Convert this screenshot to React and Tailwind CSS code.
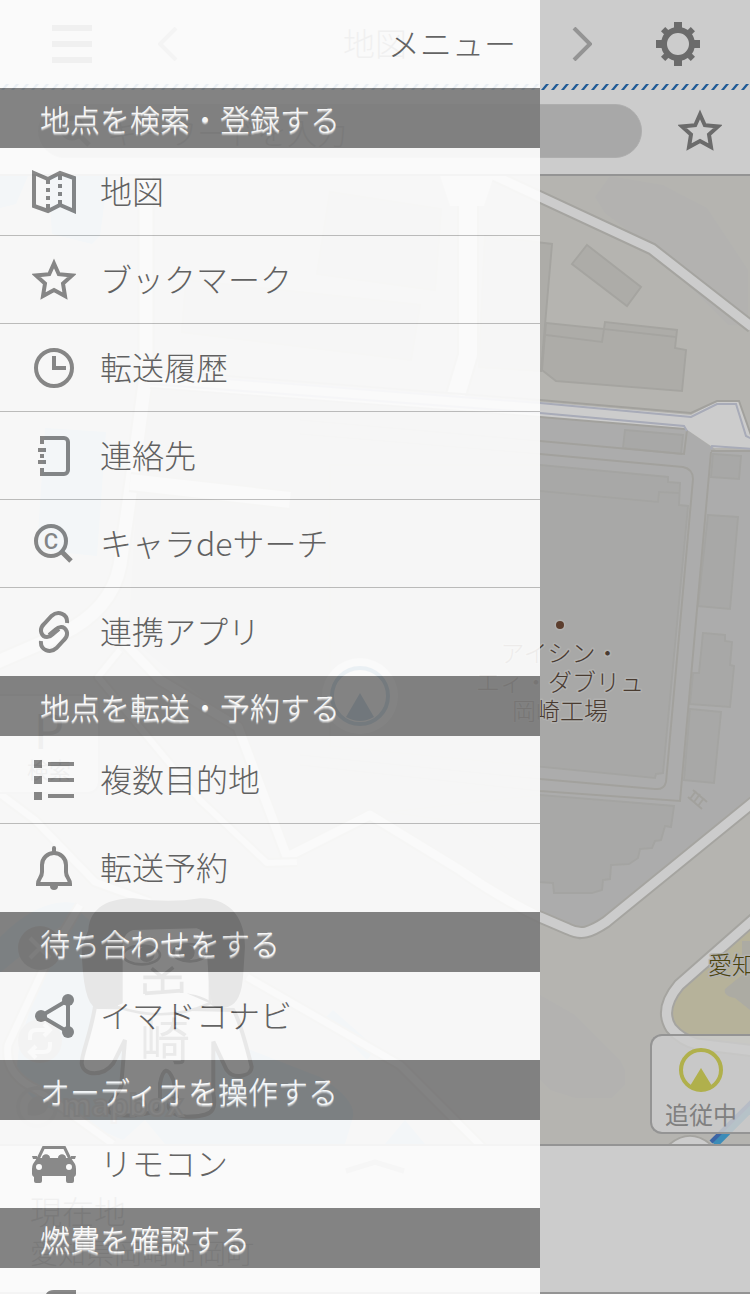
const icons = {
  map: (
    <>
      <path d="M2 3l14 6 12-6 14 5v33l-14-6-12 6-14-5z" />
      <path d="M16 9v5M16 18v4M16 26v4M16 34v6M28 3v7M28 14v4M28 22v4M28 30v6" />
    </>
  ),
  star: <path d="M22 5.500l4.800 10.700L40 17.400l-9 8.200L33 38l-11-6-11 6 2-12.400-9-8.200 13.200-1.200z" />,
  clock: (
    <>
      <circle cx="22" cy="22" r="18" />
      <path d="M22 10v12h12" />
    </>
  ),
  contacts: (
    <>
      <path d="M10 10V4h22a4 4 0 0 1 4 4v28a4 4 0 0 1-4 4H10v-6" />
      <path d="M6 16h8M8 22h4M6 28h8" />
    </>
  ),
  search: (
    <>
      <circle cx="19" cy="19" r="15" />
      <path d="M29 29l10 10" strokeWidth="5" />
      <text
        x="19"
        y="27"
        textAnchor="middle"
        fontSize="22"
        fontWeight="500"
        fill="currentColor"
        stroke="none"
        fontFamily="Roboto, sans-serif"
      >
        C
      </text>
    </>
  ),
  link: (
    <>
      <path d="M35 13c1-9-9-13-15.500-7L12 14c-6 6-2 13 3 13 3 0 5-2 6-3l6-5" />
      <path d="M35 13c1-9-9-13-15.500-7L12 14c-6 6-2 13 3 13 3 0 5-2 6-3l6-5" transform="rotate(180 22 22)" />
    </>
  ),
  list: (
    <>
      <path d="M2 6h8M2 22h8M2 38h8" strokeWidth="8" />
      <path d="M16 6h26M16 22h26M16 38h26" />
    </>
  ),
  bell: (
    <>
      <path d="M22 7a12 12 0 0 1 12 12v7c0 6 4 6 4 12H6c0-6 4-6 4-12v-7A12 12 0 0 1 22 7z" />
      <path d="M22 2v4" strokeLinecap="round" />
      <path d="M18 40a4 4 0 0 0 8 0z" fill="currentColor" stroke="none" />
    </>
  ),
  share: (
    <>
      <path d="M36 6v32L9 22z" />
      <g fill="currentColor" stroke="none">
        <circle cx="36" cy="6" r="6" />
        <circle cx="36" cy="38" r="6" />
        <circle cx="9" cy="22" r="6" />
      </g>
    </>
  ),
  car: (
    <>
      <path d="M6 17l5.500-11.500h21L38 17" strokeWidth="3" />
      <g fill="currentColor" stroke="none">
        <path d="M0 14h5v3H1zM44 14h-5v3h4z" />
        <path
          fillRule="evenodd"
          d="M5 16h5c0-5 8-5 8 0h8c0-5 8-5 8 0h5l4 6q1 2 1 5v5q0 2-2 3v4q0 2-2 2h-4q-2 0-2-2v-5H10v5q0 2-2 2H4q-2 0-2-2v-4q-2-1-2-3v-5q0-3 1-5zM7 22a3 3 0 1 0 0 6 3 3 0 1 0 0-6zM37 22a3 3 0 1 0 0 6 3 3 0 1 0 0-6z"
        />
      </g>
    </>
  ),
  fuel: <path d="M44 0H22q-9 0-9 9v35h31z" fill="currentColor" stroke="none" />,
};

const sections = [
  {
    title: "地点を検索・登録する",
    items: [
      { icon: "map", label: "地図" },
      { icon: "star", label: "ブックマーク" },
      { icon: "clock", label: "転送履歴" },
      { icon: "contacts", label: "連絡先" },
      { icon: "search", label: "キャラdeサーチ" },
      { icon: "link", label: "連携アプリ" },
    ],
  },
  {
    title: "地点を転送・予約する",
    items: [
      { icon: "list", label: "複数目的地" },
      { icon: "bell", label: "転送予約" },
    ],
  },
  { title: "待ち合わせをする", items: [{ icon: "share", label: "イマドコナビ" }] },
  { title: "オーディオを操作する", items: [{ icon: "car", label: "リモコン" }] },
  { title: "燃費を確認する", items: [{ icon: "fuel", label: "" }] },
];

function Icon({ name, className = "" }) {
  return (
    <svg
      viewBox="0 0 44 44"
      fill="none"
      stroke="currentColor"
      strokeWidth="4"
      className={`size-11 shrink-0 ${className}`}
      aria-hidden="true"
    >
      {icons[name]}
    </svg>
  );
}

function Chevron({ flip }) {
  return (
    <svg
      viewBox="0 0 20 34"
      fill="none"
      stroke="currentColor"
      strokeWidth="4"
      className={`w-5 ${flip ? "-scale-x-100" : ""}`}
    >
      <path d="M2 1l16 16L2 33" />
    </svg>
  );
}

function Gear() {
  return (
    <svg viewBox="-22 -22 44 44" fill="currentColor" className="size-11">
      <circle r="14" fill="none" stroke="currentColor" strokeWidth="6" />
      {[0, 90, 180, 270].map((a) => (
        <g key={a} transform={`rotate(${a})`}>
          <rect x="-4" y="-22" width="8" height="9" />
          <rect x="-3" y="-21" width="6" height="8" transform="rotate(45)" />
        </g>
      ))}
    </svg>
  );
}

function Arrow({ className }) {
  return (
    <svg viewBox="0 0 44 44" className={className}>
      <circle cx="22" cy="22" r="20" fill="none" stroke="currentColor" strokeWidth="4" />
      <path d="M22 20l11 18q-11 6-22 0z" fill="currentColor" />
    </svg>
  );
}

function Road({ d, width = 9 }) {
  return (
    <g fill="none" strokeLinejoin="round">
      <path d={d} stroke="#cfcec9" strokeWidth={width + 4} />
      <path d={d} stroke="#ffffff" strokeWidth={width} />
    </g>
  );
}

function MapCanvas() {
  return (
    <svg
      viewBox="0 176 750 968"
      preserveAspectRatio="xMinYMin slice"
      className="w-full h-full"
      fontFamily="'Noto Sans CJK JP', sans-serif"
    >
      <rect y="176" width="750" height="968" fill="#e3e2dc" />
      <path
        d="M610 176l53 9 44 23 41 62v56l-20-1-76-76-47-36-10-16z"
        fill="#e0dfdd"
      />
      <path d="M540 995l35 20 45 45 5 10v15l-13 13h-37l-25-8-12-12z" fill="#e0dfdd" />

      {/* water */}
      <g fill="#a8d4ef">
        <path d="M0 176h28l-12 28-16 4z" />
        <path d="M50 176h58l-8 60-8 8-40-10-2-30z" />
        <path d="M45 428l61 4-9 124-60-6z" />
        <path d="M0 937q40-40 75-34l8 14-20 8q-30 20-63 48z" />
        <path d="M16 1072l4-30 28-90 32-40 150 130 90 35q36 22 33 40l-8 27H165l-20-24-22 20-60-26q-40-14-47-42z" />
        <path d="M325 1018l8-8 43 38-9 12z" />
        <path d="M385 1144l20-24 20 24z" />
      </g>

      {/* factory grounds */}
      <path
        d="M150 385l390 27 146 17 30 21h34v358L580 940l-120-70-90-55-83 42-49-130-110-90 10-170z"
        fill="#d8d8d7"
      />
      <g fill="#d3d3d1" stroke="#cececb" strokeWidth="2">
        <path d="M330 465l210 0 128 12v5l12 1-1 22 9 1-25 267-7 1-1 4-325-32z" />
        <path d="M540 795l134 11-3 21-6-1-4 14-6 1-3 7-12 1-2 9-9 6-18 1-1 14-7 1-1 10-10 3h-38l-1-10-14-1-80-60-70-10z" />
        <path d="M625 430l58 5-2 19-58-6zM713 454l28 2-2 23-28-2zM708 515l30 2-8 92-32-3zM690 709l31 3-7 71-30-3z" />
        <path d="M703 633l22 2v6l7 1-2 23 4 1-4 41-40-3 3-31h6z" />
      </g>
      <g fill="none" stroke="#cbcac5" strokeWidth="2">
        <path d="M300 420l240 21 144 13 3-24" />
        <path d="M300 434l240 20 143 13q10 2 10 12l-27 303q-2 8-11 7l-115-10-240-24" />
        <path d="M711 452l-31 349-140-10-240-26" />
        <path d="M688 797l14 12M693 790l14 12M690 799l6-8M694 802l6-8M698 806l6-8" />
        <path d="M540 491l118 11 1-10 20 1" stroke="#cececb" />
      </g>

      {/* buildings */}
      <g fill="#d9d8d3" stroke="#cfcec9" strokeWidth="2">
        <path d="M330 192l111 17-6 81-118-16zM186 280l234 25-9 55-229-28zM485 236l67 8-11 127-62-4z" />
        <path d="M587 245l54 42-14 19-55-42z" />
        <path d="M546 323l58 6 1-7 72 8-2 18 11 2-4 41-126-10-14-11z" />
        <path d="M546 335l56 7 2-13 72 8" fill="none" />
      </g>

      {/* park */}
      <path d="M750 926l-72 62q-18 20-2 44 14 14 74 16z" fill="#e4dfc1" />
      <path d="M742 941h8v69l-15-12q-12-2-10-9l17-14z" fill="#d8d6cc" />

      <Road d="M146 170v205l-14 105-12 85q-8 45-60 70L-5 663" width={13} />
      <Road d="M456 170l12 35v150l-12 40" width={18} />
      <Road d="M130 482l160 18" width={16} />
      <Road d="M478 168l174 81 100 78" />
      <Road d="M122 640l38 40 78 47 49 130 83-42 90 55q40 28 80 47l28 12q10 5 18 3t20-10l150-122" />
      <Road d="M120 650l-22 27 102 123 67 63 30-1" width={6} />
      <Road d="M-5 790l40 30 60 62 55 20M80 905l-30 50-42 90q-4 30 30 45l75 54M247 977l153 88 85 85" width={7} />
      <Road d="M755 918l-76 67q-20 24-8 43 10 12 26 16l58 7" width={9} />
      <Road d="M672 1150q18-16 36 0" width={10} />

      <path d="M440 176l10 30h34l10-30z" fill="#ffffff" />
      <path d="M150 372l390 30 151 13 26-14h22l14 40v7h-39l-28-19-146-12-390-30z" fill="#ffffff" />
      <g fill="none" strokeWidth="2">
        <path d="M150 370l390 30 151 13 26-12h22l12 34M150 388l390 29 145 12M711 451h39" stroke="#cbcac5" />
        <path d="M150 373l390 30 151 14 26-13h19l10 32 6 3M150 384l390 29 144 13 3 5M711 449l1-3 40 3" stroke="#d2d6e6" />
      </g>

      <path d="M714 1144l38-38" stroke="#4bb0e6" strokeWidth="9" />
      <path d="M711 1142l42-42" stroke="#4c7fd0" strokeWidth="4" />

      {/* point of interest labels */}
      <g
        fontSize="24"
        fontWeight="300"
        textAnchor="middle"
        fill="#5c4a3c"
        stroke="#dededc"
        strokeWidth="3"
        paintOrder="stroke"
        strokeLinejoin="round"
      >
        <circle cx="560" cy="625" r="4" fill="#744e3a" />
        <text x="560" y="662">アイシン・</text>
        <text x="560" y="691">エィ・ダブリュ</text>
        <text x="560" y="720">岡崎工場</text>
        <text x="708" y="974" textAnchor="start" fill="#5f5512">愛知</text>
      </g>

      {/* current position */}
      <circle cx="360" cy="696" r="38" fill="#ffffff" />
      <circle cx="360" cy="696" r="28" fill="none" stroke="#3f87b8" strokeWidth="4" />
      <path d="M360 693l14 24q-14 8-28 0z" fill="#1668a0" />

      {/* mascot */}
      <g transform="translate(0 880) scale(.3333)">
        <path
          d="M285 380C270 470 245 520 245 550c5 40 65 40 95 0l35-70-10 120c5 40-40 50-40 90 5 30 155 15 155-10v-70q15-70 40-10l10 50c-40 20-30 55 30 60 80 0 90-20 80-70V485l40 85c20 30 75 20 75-10C740 500 720 420 700 390z"
          fill="#ffffff"
          stroke="#222222"
          strokeWidth="12"
        />
        <path d="M350 140h280v230q-130 60-280 10z" fill="#ffffff" stroke="#222222" strokeWidth="8" />
        <path
          d="M265 150C270 80 330 55 400 55q110 15 200 0c100 0 135 70 135 145l-5 80q-5 90-45 100-40 12-55-10L560 340q60 10 75 30-10-60-15-180-5-40-30-45L400 150q-35 10-32 60v160q-50 24-80 14-40-14-43-184z"
          fill="#111111"
        />
        <g fill="#111111">
          <ellipse cx="425" cy="225" rx="55" ry="28" fill="none" stroke="#111111" strokeWidth="8" />
          <ellipse cx="570" cy="218" rx="50" ry="26" fill="none" stroke="#111111" strokeWidth="8" />
          <circle cx="440" cy="222" r="24" />
          <circle cx="560" cy="218" r="24" />
        </g>
        <path
          d="M455 265l30 25 35-28M430 292h115M488 292v42M435 310v32M435 340l110-8M545 305v34"
          fill="none"
          stroke="#222222"
          strokeWidth="11"
        />
        <text x="495" y="540" fontSize="150" textAnchor="middle" fill="#333333">崎</text>
      </g>

      {/* mascot controls */}
      <g stroke="#ffffff" strokeWidth="4" fill="none">
        <circle cx="40" cy="948" r="22" fill="#666666" stroke="none" />
        <path d="M30 938l20 20M50 938l-20 20" stroke="#aaaaaa" />
        <circle cx="40" cy="1041" r="22" fill="#b0b0b0" stroke="none" />
        <path d="M30 1040v-4q0-6 6-6h12M44 1024l6 6-6 6M50 1042v4q0 6-6 6H32M36 1046l-6 6 6 6" />
        <circle cx="37" cy="1107" r="19" stroke="#cccccc" />
        <path d="M28 1115q-3-18 12-19 10 2 8 11-4 11-20 8z" fill="#bbbbbb" stroke="none" />
      </g>
      <text
        x="62"
        y="1116"
        fontSize="30"
        fontWeight="700"
        fill="#ffffff"
        stroke="#a8a8a8"
        strokeWidth="2"
        fontFamily="'Open Sans', sans-serif"
      >
        mapbox
      </text>
    </svg>
  );
}

function MapScreen() {
  return (
    <div className="h-full flex flex-col bg-white text-[#868686]">
      <header className="h-[84px] shrink-0 flex items-center px-[50px] pt-1">
        <div className="flex items-center gap-16">
          <button aria-label="メニューを開く" className="w-11 flex flex-col items-center gap-[10px]">
            <span className="w-10 h-[6px] bg-current" />
            <span className="w-10 h-[6px] bg-current" />
            <span className="w-10 h-[6px] bg-current" />
          </button>
          <button aria-label="前へ" className="text-[#b9b9b9]">
            <Chevron flip />
          </button>
        </div>
        <h1 className="flex-1 pb-1 text-center text-[32px] font-light">地図</h1>
        <div className="flex items-center gap-16">
          <button aria-label="次へ" className="text-[#b9b9b9]">
            <Chevron />
          </button>
          <button aria-label="設定">
            <Gear />
          </button>
        </div>
      </header>

      <svg className="w-full h-[6px] shrink-0" aria-hidden="true">
        <pattern id="stripe" width="10" height="6" patternUnits="userSpaceOnUse">
          <path d="M1 6h3l5-6H6z" fill="#2670bc" />
        </pattern>
        <rect width="100%" height="6" fill="url(#stripe)" />
      </svg>

      <div className="h-[86px] shrink-0 flex items-center gap-9 pl-[38px] pr-7 pb-[2px] border-b-2 border-[#b9b9b9]">
        <label className="flex-1 h-[54px] flex items-center gap-4 px-5 rounded-full bg-[#d2d2d2] border border-[#dadada]">
          <svg viewBox="0 0 32 32" fill="none" stroke="currentColor" strokeWidth="5" className="size-8 shrink-0">
            <circle cx="13" cy="13" r="10" />
            <path d="M20 20l10 10" />
          </svg>
          <input
            type="search"
            aria-label="キーワード"
            placeholder="キーワードを入力"
            className="flex-1 min-w-0 bg-transparent text-3xl font-light placeholder:text-[#868686]"
          />
        </label>
        <button aria-label="ブックマークに登録">
          <Icon name="star" />
        </button>
      </div>

      <main className="relative flex-1 min-h-0">
        <MapCanvas />
        <button className="absolute left-0 bottom-[350px] w-[100px] h-[100px] flex flex-col items-center justify-center rounded-r-xl border-2 border-l-0 border-[#cccccc] bg-white/80">
          <span className="text-5xl leading-none">P</span>
          <span className="text-[22px] leading-8">検索</span>
        </button>
        <button className="absolute right-0 bottom-[10px] w-[100px] h-[100px] flex flex-col items-center justify-end gap-1 rounded-l-xl border-2 border-r-0 border-[#b9b9b9] bg-white/85">
          <Arrow className="size-11 text-[#dcdc5f]" />
          <span className="text-2xl leading-9 text-[#a0a0a0]">追従中</span>
        </button>
      </main>

      <footer className="h-[150px] shrink-0 px-[30px] border-y-2 border-[#b9b9b9] font-light">
        <svg viewBox="0 0 60 16" fill="none" stroke="#cccccc" strokeWidth="5" className="w-[60px] mt-3 mx-auto">
          <path d="M1 13L30 4l29 9" />
        </svg>
        <p className="mt-4 text-[32px] leading-10">現在地</p>
        <p className="mt-1 text-[28px] leading-9">愛知県岡崎市岡町</p>
      </footer>
    </div>
  );
}

function Drawer() {
  return (
    <nav aria-label="メニュー" className="absolute inset-y-0 left-0 w-[72%] overflow-hidden bg-white opacity-90">
      <div className="h-[88px] flex items-center justify-end px-6">
        <span className="pb-1 text-[32px] font-light text-[#595959]">メニュー</span>
      </div>
      {sections.map((section) => (
        <section key={section.title}>
          <h2 className="h-[60px] flex items-center px-10 bg-[#7c7c7c] text-white text-3xl font-light [text-shadow:0_1px_0_#d0d0d0,0_2px_1px_#b0b0b0]">
            {section.title}
          </h2>
          <ul>
            {section.items.map((item) => (
              <li key={item.icon} className="h-22 border-b border-[#bcbcbc] last:border-b-0">
                <a href={`#${item.icon}`} className="h-full flex items-center gap-6 px-8 text-[#595959]">
                  <Icon name={item.icon} className="text-[#828282]" />
                  <span className="pb-1 text-[32px] font-light">{item.label}</span>
                </a>
              </li>
            ))}
          </ul>
        </section>
      ))}
    </nav>
  );
}

export default function App() {
  return (
    <div className="relative h-screen overflow-hidden font-['Noto_Sans_CJK_JP',sans-serif]">
      <MapScreen />
      <div className="absolute inset-0 bg-black/20" />
      <Drawer />
    </div>
  );
}
